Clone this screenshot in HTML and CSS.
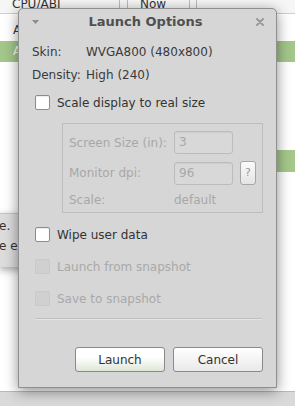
FILE: index.html
```html
<!DOCTYPE html>
<html>
<head>
<meta name="viewport" content="width=device-width, initial-scale=1.0">
<link rel="stylesheet" href="styles.css">
</head>
<body>
<div id=app>
  <div class=thead>
    <div class="th th-abi">CPU/ABI</div>
    <div class="th th-now">Now</div>
    <div class="th th-rest"></div>
  </div>
  <div class=trow><span>A</span></div>
  <div class="trow sel"><span>A</span></div>
  <div class="trow far"><div class=sel-end></div></div>
  <div class=statusbar></div>
</div>

<div class=popup>
  <div>e.</div>
  <div>e er</div>
</div>

<div class=dialog>
  <div class=titlebar>
    <svg class=menu-arrow width=7 height=4 viewBox="0 0 7 4"><polygon points="0,0 7,0 3.5,4" fill="#8c8c8c"/></svg>
    <div class=title>Launch Options</div>
    <svg class=close width=8 height=8 viewBox="0 0 8 8"><path d="M1 1L7 7M7 1L1 7" stroke="#9a9a9a" stroke-width="2" stroke-linecap="round"/></svg>
  </div>

  <div class="info first"><span class=key>Skin:</span><span>WVGA800 (480x800)</span></div>
  <div class=info><span class=key>Density:</span><span>High (240)</span></div>

  <div class=check><span class=box></span>Scale display to real size</div>

  <div class=group>
    <div class=glabel>Screen Size (in):</div>
    <div class=field>3</div>
    <div></div>
    <div class=glabel>Monitor dpi:</div>
    <div class=field>96</div>
    <div class=help>?</div>
    <div class=glabel>Scale:</div>
    <div class=glabel>default</div>
    <div></div>
  </div>

  <div class="check wipe"><span class=box></span>Wipe user data</div>
  <div class="check off"><span class=box></span>Launch from snapshot</div>
  <div class="check off"><span class=box></span>Save to snapshot</div>

  <div class=sep></div>

  <div class=buttons>
    <button class="btn btn-default">Launch</button>
    <button class=btn>Cancel</button>
  </div>
</div>
</body>
</html>
```

FILE: styles.css
```css
body, html {
  margin:0;
  padding:0;
}

body {
  width:295px;
  height:406px;
  overflow:hidden;
  position:relative;
  background:#fff;
  font-family:"DejaVu Sans", sans-serif;
  font-size:12px;
  color:#3a3a3a;
}

/* window behind the dialog */
#app {
  height:406px;
  display:flex;
  flex-direction:column;
}

.thead {
  height:13px;
  display:flex;
  border-bottom:1px solid #cfcfcf;
  background:#f6f6f6;
}

.th {
  line-height:9px;
  overflow:hidden;
  color:#333;
}

.th-abi {
  width:107px;
  padding-left:12px;
  border-right:1px solid #bcbcbc;
}

.th-now {
  width:49px;
  margin-left:7px;
  padding-left:12px;
  border-left:1px solid #bcbcbc;
  border-right:1px solid #bcbcbc;
}

.th-rest {
  flex:1;
  margin-left:6px;
  border-left:1px solid #bcbcbc;
}

.trow {
  height:27px;
  line-height:33px;
  padding-left:13px;
}

.trow.sel {
  height:21px;
  line-height:21px;
  background:#a3c68a;
  color:#fff;
}

.trow.far {
  margin-top:88px;
  height:22px;
  padding:0;
  display:flex;
}

.sel-end {
  margin-left:auto;
  width:30px;
  background:#a5c88a;
}

.statusbar {
  margin-top:auto;
  height:14px;
  background:#d9d9d9;
  border-top:1px solid #b9b9b9;
}

.popup {
  position:absolute;
  left:-1px;
  top:213px;
  width:60px;
  height:54px;
  background:#dcdcdc;
  border-top:1px solid #c4c4c4;
  box-shadow:0 3px 8px rgba(0,0,0,0.35);
  color:#333;
  line-height:20px;
  padding-top:2px;
  box-sizing:border-box;
}

/* dialog */
.dialog {
  position:absolute;
  left:18px;
  top:8px;
  width:231px;
  height:378px;
  background:#d6d6d6;
  border:1px solid #8f8f8f;
  border-radius:5px 5px 0 0;
  box-shadow:0 3px 14px rgba(0,0,0,0.45);
  padding:0 13px;
}

.titlebar {
  height:24px;
  display:flex;
  align-items:center;
}

.menu-arrow {
  margin-top:1px;
}

.title {
  flex:1;
  text-align:center;
  font-weight:bold;
  font-size:13px;
  color:#505050;
  margin-left:-4px;
}

.close {
  margin-top:2px;
  margin-right:-1px;
}

.info {
  height:23px;
  line-height:23px;
  display:flex;
}

.info.first {
  margin-top:8px;
}

.key {
  width:54px;
}

.check {
  height:23px;
  display:flex;
  align-items:center;
  padding-left:3px;
  margin-top:4px;
  color:#333;
}

.box {
  width:13px;
  height:13px;
  border:1px solid #8c8c8c;
  border-radius:2px;
  background:#fff;
  margin-right:7px;
  box-shadow:inset 0 1px 1px rgba(0,0,0,0.08);
}

.check.wipe {
  margin-top:10px;
}

.check.off {
  margin-top:9px;
  color:#a9a9a9;
}

.check.off .box {
  background:#d0d0d0;
  border-color:#c9c9c9;
  box-shadow:none;
}

.group {
  margin:9px 0 0 30px;
  height:90px;
  border:1px solid #bdbdbd;
  padding:7px 0 0 6px;
  box-sizing:border-box;
  display:grid;
  grid-template-columns:98px 59px 16px;
  grid-template-rows:23px 24px 16px;
  column-gap:7px;
  row-gap:7px;
  align-items:center;
}

.group > div:nth-child(n+7) {
  margin-top:-1px;
}

.glabel {
  color:#a8a8a8;
}

.field {
  height:21px;
  line-height:21px;
  border:1px solid #bcbcbc;
  border-radius:3px;
  padding-left:4px;
  color:#a8a8a8;
  background:#d8d8d8;
  box-shadow:inset 0 1px 1px rgba(0,0,0,0.05);
}

.help {
  height:22px;
  line-height:22px;
  text-align:center;
  border:1px solid #a6a6a6;
  border-radius:3px;
  background:linear-gradient(#fbfbfb, #e4e4e4);
  color:#9a9a9a;
  font-size:11px;
}

.sep {
  margin:8px 1px 0 3px;
  height:1px;
  background:#c0c0c0;
  border-bottom:1px solid #e4e4e4;
}

.buttons {
  display:flex;
  justify-content:flex-end;
  gap:8px;
  margin-top:27px;
}

.btn {
  width:90px;
  height:25px;
  border:1px solid #8a8a8a;
  border-radius:3px;
  background:linear-gradient(#ffffff, #e9e9e9);
  font-family:"DejaVu Sans", sans-serif;
  font-size:12px;
  color:#333;
  padding:0;
}

.btn-default {
  background:linear-gradient(#ffffff 40%, #dfe6d6);
}
```
